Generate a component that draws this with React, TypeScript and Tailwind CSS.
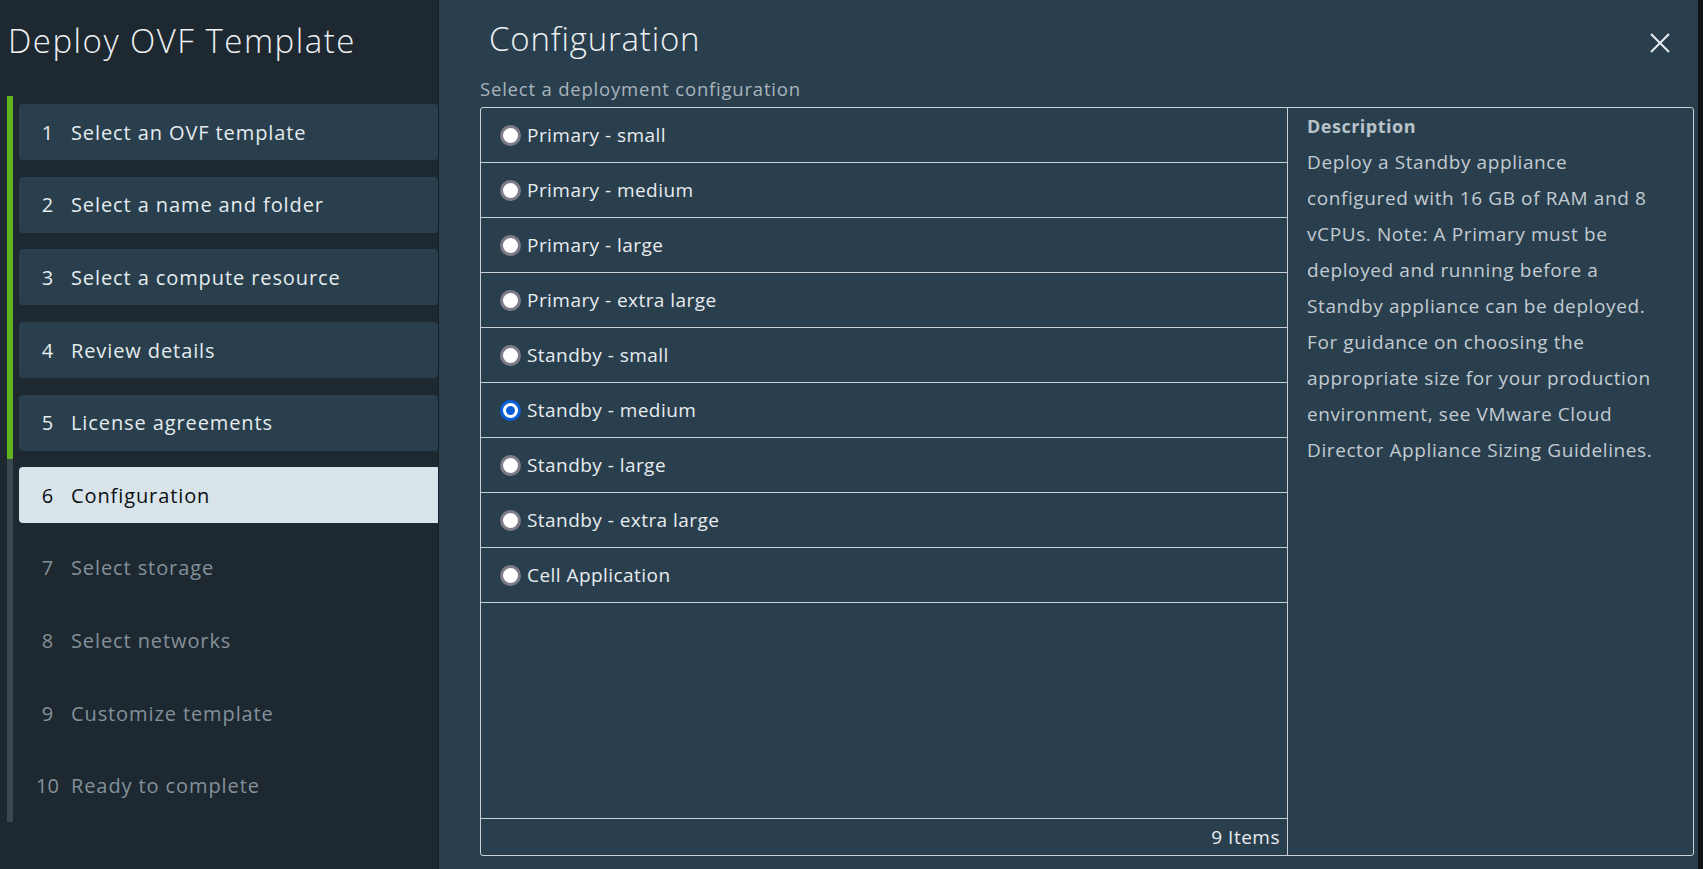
import React from 'react';

const steps = [
  'Select an OVF template',
  'Select a name and folder',
  'Select a compute resource',
  'Review details',
  'License agreements',
  'Configuration',
  'Select storage',
  'Select networks',
  'Customize template',
  'Ready to complete',
];

const current = 6;

const configs = [
  'Primary - small',
  'Primary - medium',
  'Primary - large',
  'Primary - extra large',
  'Standby - small',
  'Standby - medium',
  'Standby - large',
  'Standby - extra large',
  'Cell Application',
];

const selected = 'Standby - medium';

const descLines = [
  'Deploy a Standby appliance',
  'configured with 16 GB of RAM and 8',
  'vCPUs. Note: A Primary must be',
  'deployed and running before a',
  'Standby appliance can be deployed.',
  'For guidance on choosing the',
  'appropriate size for your production',
  'environment, see VMware Cloud',
  'Director Appliance Sizing Guidelines.',
];

const Radio: React.FC<{ checked: boolean }> = ({ checked }) =>
  checked ? (
    <span className="flex h-[21px] w-[21px] shrink-0 items-center justify-center rounded-full bg-[#0b5fd6]">
      <span className="h-[15px] w-[15px] rounded-full border-[3px] border-white bg-[#0b5fd6]" />
    </span>
  ) : (
    <span className="h-[21px] w-[21px] shrink-0 rounded-full border-[3px] border-[#7c7b87] bg-white" />
  );

const StepItem: React.FC<{ n: number; label: string }> = ({ n, label }) => {
  const done = n < current;
  const active = n === current;
  return (
    <div
      className={
        'border-l-[6px] py-[8.3px] ' + (done ? 'border-[#62b320]' : 'border-[#3a4950]')
      }
    >
      <div
        className={
          'ml-[6px] flex h-[56px] items-center rounded-l-[4px] pt-[1px] text-[20px] ' +
          (active
            ? 'bg-[#d8e3ea] text-[#0b0f12]'
            : done
            ? 'rounded-r-[4px] bg-[#293f4d] text-[#e6ebee]'
            : 'text-[#84919a]')
        }
      >
        <span className="ml-[10px] w-[37px] text-center">{n}</span>
        <span className="ml-[5px] tracking-[0.9px]">{label}</span>
      </div>
    </div>
  );
};

export default function App() {
  return (
    <div
      className="flex h-screen w-full overflow-hidden bg-[#141a1f]"
      style={{ fontFamily: '"Open Sans", "Noto Sans", sans-serif' }}
    >
      {/* left wizard steps */}
      <aside className="w-[439px] shrink-0 border-r border-[#162029] bg-[#1d2831]">
        <div className="h-[96px] pl-[8px] pt-[21px]">
          <h1 className="text-[33px] font-light leading-[40px] tracking-[1.5px] text-[#eef1f3]">
            Deploy OVF Template
          </h1>
        </div>
        <div className="pl-[7px]">
          {steps.map((s, i) => (
            <StepItem key={s} n={i + 1} label={s} />
          ))}
        </div>
      </aside>

      {/* main */}
      <main className="flex flex-1 flex-col bg-[#2a3f4e] pb-[13px] pl-[41px] pr-[4px]">
        <div className="flex h-[70px] items-start justify-between">
          <h2 className="ml-[9px] pt-[19px] text-[33px] font-light leading-[40px] tracking-[0.8px] text-[#eef1f3]">
            Configuration
          </h2>
          <button className="mr-[24px] mt-[33px] text-[#e8ecef]" aria-label="Close">
            <svg width="20" height="20" viewBox="0 0 20 20" fill="none" stroke="currentColor" strokeWidth="2">
              <path d="M1 1L19 19M19 1L1 19" />
            </svg>
          </button>
        </div>
        <div className="flex h-[37px] items-center text-[18.5px] tracking-[0.8px] text-[#a9b4bc]">
          Select a deployment configuration
        </div>

        <div className="flex flex-1 rounded-[3px] border border-[#c9d1d6]">
          <div className="flex w-[807px] flex-col border-r border-[#c9d1d6]">
            {configs.map((c) => (
              <div
                key={c}
                className="flex h-[55px] items-center border-b border-[#c9d1d6] pl-[19px] text-[19px] tracking-[0.45px] text-[#e8ecef]"
              >
                <Radio checked={c === selected} />
                <span className="ml-[6px]">{c}</span>
              </div>
            ))}
            <div className="flex-1" />
            <div className="flex h-[37px] items-center justify-end border-t border-[#c9d1d6] pr-[7px] text-[19px] tracking-[0.5px] text-[#e8ecef]">
              9 Items
            </div>
          </div>
          <div className="flex-1 pl-[19px]">
            <div className="text-[18px] font-bold leading-[36px] tracking-[0.5px] text-[#b9c3ca]">
              Description
            </div>
            <div className="text-[19px] leading-[36px] tracking-[0.6px] text-[#c3cbd1]">
              {descLines.map((l) => (
                <div key={l}>{l}</div>
              ))}
            </div>
          </div>
        </div>
      </main>

      <div className="w-[5px] shrink-0 bg-[#101418]" />
    </div>
  );
}
